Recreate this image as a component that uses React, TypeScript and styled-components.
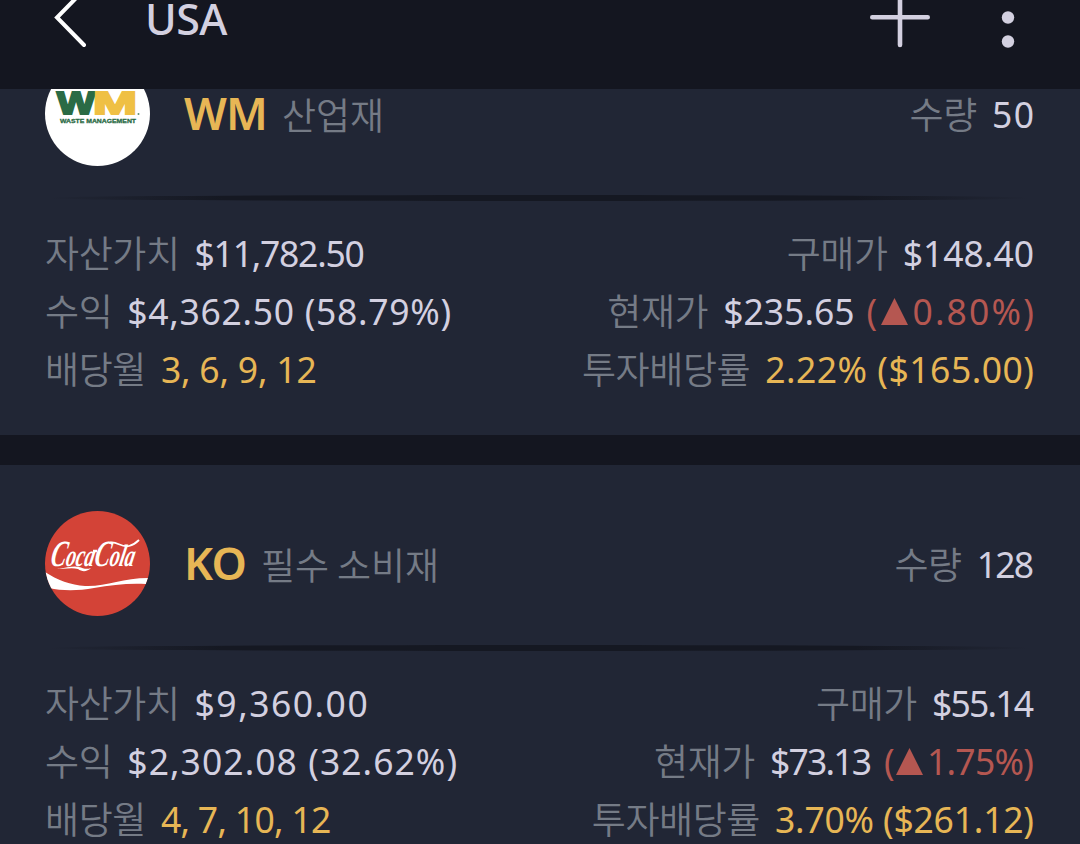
import React from 'react';
import styled, { createGlobalStyle } from 'styled-components';

const GlobalStyle = createGlobalStyle`
  body {
    margin: 0;
    background-color: #141620;
    overflow: hidden;
  }
`;

type Tone = 'plain' | 'gold' | 'red';

interface Part {
  text: string;
  tone?: Tone;
  spacing?: number;
  arrow?: boolean;
}

interface Field {
  label: string;
  parts: Part[];
}

interface Stock {
  ticker: string;
  sector: string;
  quantity: Part;
  logo: React.ReactNode;
  left: Field[];
  right: Field[];
}

const tones: Record<Tone, string> = {
  plain: '#d3d0e0',
  gold: '#e7b655',
  red: '#b55751'
};

// Estilos
const Screen = styled.div`
  display: flex;
  flex-direction: column;
  width: 1080px;
  height: 844px;
  overflow: hidden;
  background-color: #141620;
  font-family: 'Noto Sans', 'Noto Sans CJK KR', sans-serif;
`;

const Header = styled.header`
  position: relative;
  z-index: 1;
  display: flex;
  align-items: flex-start;
  flex: none;
  height: 89px;
  padding: 0 54px 0 46px;
  box-sizing: border-box;
  background-color: #141620;
`;

const Title = styled.h1`
  flex: 1;
  margin: 0 0 0 49px;
  color: #d3d0e0;
  font-size: 43px;
  font-weight: 500;
  letter-spacing: -0.6px;
  line-height: 38px;
`;

const IconButton = styled.button<{ $width: number }>`
  display: flex;
  width: ${p => p.$width}px;
  height: 60px;
  padding: 0;
  border: none;
  background: none;
  color: #d3d0e0;
`;

const List = styled.main`
  display: flex;
  flex-direction: column;
  gap: 30px;
  margin-top: -74px;
`;

const Card = styled.section`
  flex: none;
  height: 420px;
  padding: 46px 46px 0 45px;
  box-sizing: border-box;
  background-color: #212635;
`;

const CardHead = styled.div`
  display: flex;
  align-items: center;
  height: 105px;
`;

const Logo = styled.div`
  width: 105px;
  height: 105px;
  border-radius: 50%;
  overflow: hidden;

  svg {
    display: block;
  }
`;

const Ticker = styled.strong`
  margin: 0 0 1px 34px;
  color: #e7b655;
  font-size: 45px;
  font-weight: 600;
  letter-spacing: -0.8px;
  line-height: 60px;
`;

const Label = styled.span`
  margin-top: 1px;
  color: #757b86;
  font-family: 'Noto Sans CJK KR', sans-serif;
  font-size: 37px;
  font-weight: 350;
  letter-spacing: -0.4px;
  line-height: 58px;
`;

const Sector = styled(Label)`
  flex: 1;
  margin: 0 0 0 15px;
  letter-spacing: -0.1px;
`;

const Divider = styled.div`
  height: 6px;
  margin-top: 29px;
  border-radius: 50%;
  background: linear-gradient(90deg, transparent, #151822 18%, #151822 82%, transparent);
`;

const Details = styled.div`
  display: flex;
  justify-content: space-between;
  margin-top: 21px;
`;

const Column = styled.div<{ $end?: boolean }>`
  display: flex;
  flex-direction: column;
  align-items: ${p => (p.$end ? 'flex-end' : 'flex-start')};
`;

const Row = styled.div`
  display: flex;
  align-items: flex-start;
  height: 58px;
  white-space: pre;
`;

const Quantity = styled.div`
  margin-bottom: 3px;
`;

const Values = styled.span`
  display: flex;
  gap: 12px;
  margin: 2px 0 0 15px;
`;

const Value = styled.span<{ $tone?: Tone; $spacing?: number }>`
  margin-right: ${p => -(p.$spacing || 0)}px;
  color: ${p => tones[p.$tone || 'plain']};
  font-size: 35.5px;
  letter-spacing: ${p => p.$spacing || 0}px;
  line-height: 58px;
`;

const Arrow = styled.svg`
  width: 27px;
  height: 27px;
  margin: 0 4px 0 2px;
  vertical-align: 0;
`;

const WmLogo = () => (
  <svg width="105" height="105" viewBox="0 0 105 105">
    <rect width="105" height="105" fill="#fff" />
    <g fontFamily="Liberation Sans, sans-serif" fontWeight="700" fontSize="31" strokeWidth="2">
      <text x="12" y="53" textLength="38" lengthAdjust="spacingAndGlyphs" fill="#2a6b45" stroke="#2a6b45">W</text>
      <text x="48" y="53" textLength="44" lengthAdjust="spacingAndGlyphs" fill="#efc044" stroke="#efc044">M</text>
    </g>
    <text x="15" y="61.5" textLength="76" lengthAdjust="spacingAndGlyphs" fontFamily="Liberation Sans, sans-serif" fontWeight="700" fontSize="6.2" fill="#2a6b45" stroke="#2a6b45" strokeWidth="0.3">WASTE MANAGEMENT</text>
    <circle cx="93.5" cy="53" r="1" fill="#5e8f73" />
  </svg>
);

const CokeLogo = () => (
  <svg width="105" height="105" viewBox="0 0 105 105">
    <rect width="105" height="105" fill="#d34337" />
    <text
      x="5"
      y="55"
      textLength="84"
      lengthAdjust="spacingAndGlyphs"
      transform="translate(11 0) skewX(-12)"
      fill="#fff"
      fontFamily="Liberation Serif, serif"
      fontStyle="italic"
      fontWeight="700"
      fontSize="31"
    >
      <tspan fontSize="37">C</tspan>oca<tspan fontSize="37">C</tspan>ola
    </text>
    <path d="M48 40h4" stroke="#fff" strokeWidth="2.4" />
    <path d="M64 32c7-3 12 5 20 3 4-1 7-3 10-6" fill="none" stroke="#fff" strokeWidth="1.8" />
    <path d="M12 57c8 1 15-3 22-1 4 1 7 3 12 1-4 4-9 4-13 1-8-2-14 1-21-1z" fill="#fff" />
    <path d="M0 61c12 8 26 13 40 14 20 1 38-8 63-8l-2 6c-18-1-34 1-52 4-16 3-32 3-45 0z" fill="#fff" />
  </svg>
);

const stocks: Stock[] = [
  {
    ticker: 'WM',
    sector: '산업재',
    quantity: { text: '50', spacing: 1.5 },
    logo: <WmLogo />,
    left: [
      { label: '자산가치', parts: [{ text: '$11,782.50', spacing: -1.25 }] },
      { label: '수익', parts: [{ text: '$4,362.50 (58.79%)', spacing: 0.7 }] },
      { label: '배당월', parts: [{ text: '3, 6, 9, 12', tone: 'gold', spacing: -0.2 }] }
    ],
    right: [
      { label: '구매가', parts: [{ text: '$148.40' }] },
      { label: '현재가', parts: [{ text: '$235.65' }, { text: '0.80%)', tone: 'red', arrow: true, spacing: 2.2 }] },
      { label: '투자배당률', parts: [{ text: '2.22% ($165.00)', tone: 'gold', spacing: 0.5 }] }
    ]
  },
  {
    ticker: 'KO',
    sector: '필수 소비재',
    quantity: { text: '128', spacing: -1.8 },
    logo: <CokeLogo />,
    left: [
      { label: '자산가치', parts: [{ text: '$9,360.00', spacing: 1.5 }] },
      { label: '수익', parts: [{ text: '$2,302.08 (32.62%)', spacing: 1.05 }] },
      { label: '배당월', parts: [{ text: '4, 7, 10, 12', tone: 'gold', spacing: -0.7 }] }
    ],
    right: [
      { label: '구매가', parts: [{ text: '$55.14', spacing: -1.8 }] },
      { label: '현재가', parts: [{ text: '$73.13', spacing: -1.8 }, { text: '1.75%)', tone: 'red', arrow: true, spacing: -0.7 }] },
      { label: '투자배당률', parts: [{ text: '3.70% ($261.12)', tone: 'gold', spacing: -0.2 }] }
    ]
  }
];

const FieldRow = ({ label, parts }: Field) => (
  <Row>
    <Label>{label}</Label>
    <Values>
      {parts.map(part => (
        <Value key={part.text} $tone={part.tone} $spacing={part.spacing}>
          {part.arrow && (
            <>
              (
              <Arrow viewBox="0 0 27 27">
                <path d="M13.5 0L27 27H0z" fill="currentColor" />
              </Arrow>
            </>
          )}
          {part.text}
        </Value>
      ))}
    </Values>
  </Row>
);

const StockCard = ({ stock }: { stock: Stock }) => (
  <Card>
    <CardHead>
      <Logo>{stock.logo}</Logo>
      <Ticker>{stock.ticker}</Ticker>
      <Sector>{stock.sector}</Sector>
      <Quantity>
        <FieldRow label="수량" parts={[stock.quantity]} />
      </Quantity>
    </CardHead>
    <Divider />
    <Details>
      <Column>
        {stock.left.map(field => <FieldRow key={field.label} {...field} />)}
      </Column>
      <Column $end>
        {stock.right.map(field => <FieldRow key={field.label} {...field} />)}
      </Column>
    </Details>
  </Card>
);

const App: React.FC = () => (
  <>
    <GlobalStyle />
    <Screen>
      <Header>
        <IconButton $width={50} aria-label="뒤로">
          <svg width="50" height="60" viewBox="0 0 50 60" fill="none" stroke="#fff" strokeWidth="4" strokeLinecap="round">
            <path d="M38 -10L11 17.5L38 45" />
          </svg>
        </IconButton>
        <Title>USA</Title>
        <IconButton $width={60} aria-label="추가">
          <svg width="60" height="60" viewBox="0 0 60 60" stroke="currentColor" strokeWidth="4.6" strokeLinecap="round">
            <path d="M2.3 17.3H57.7M30 -10V45" />
          </svg>
        </IconButton>
        <IconButton $width={96} aria-label="메뉴">
          <svg width="96" height="60" viewBox="0 0 96 60" fill="currentColor">
            <circle cx="78" cy="17.5" r="6.2" />
            <circle cx="78" cy="41.5" r="6.2" />
          </svg>
        </IconButton>
      </Header>
      <List>
        {stocks.map(stock => <StockCard key={stock.ticker} stock={stock} />)}
      </List>
    </Screen>
  </>
);

export default App;
